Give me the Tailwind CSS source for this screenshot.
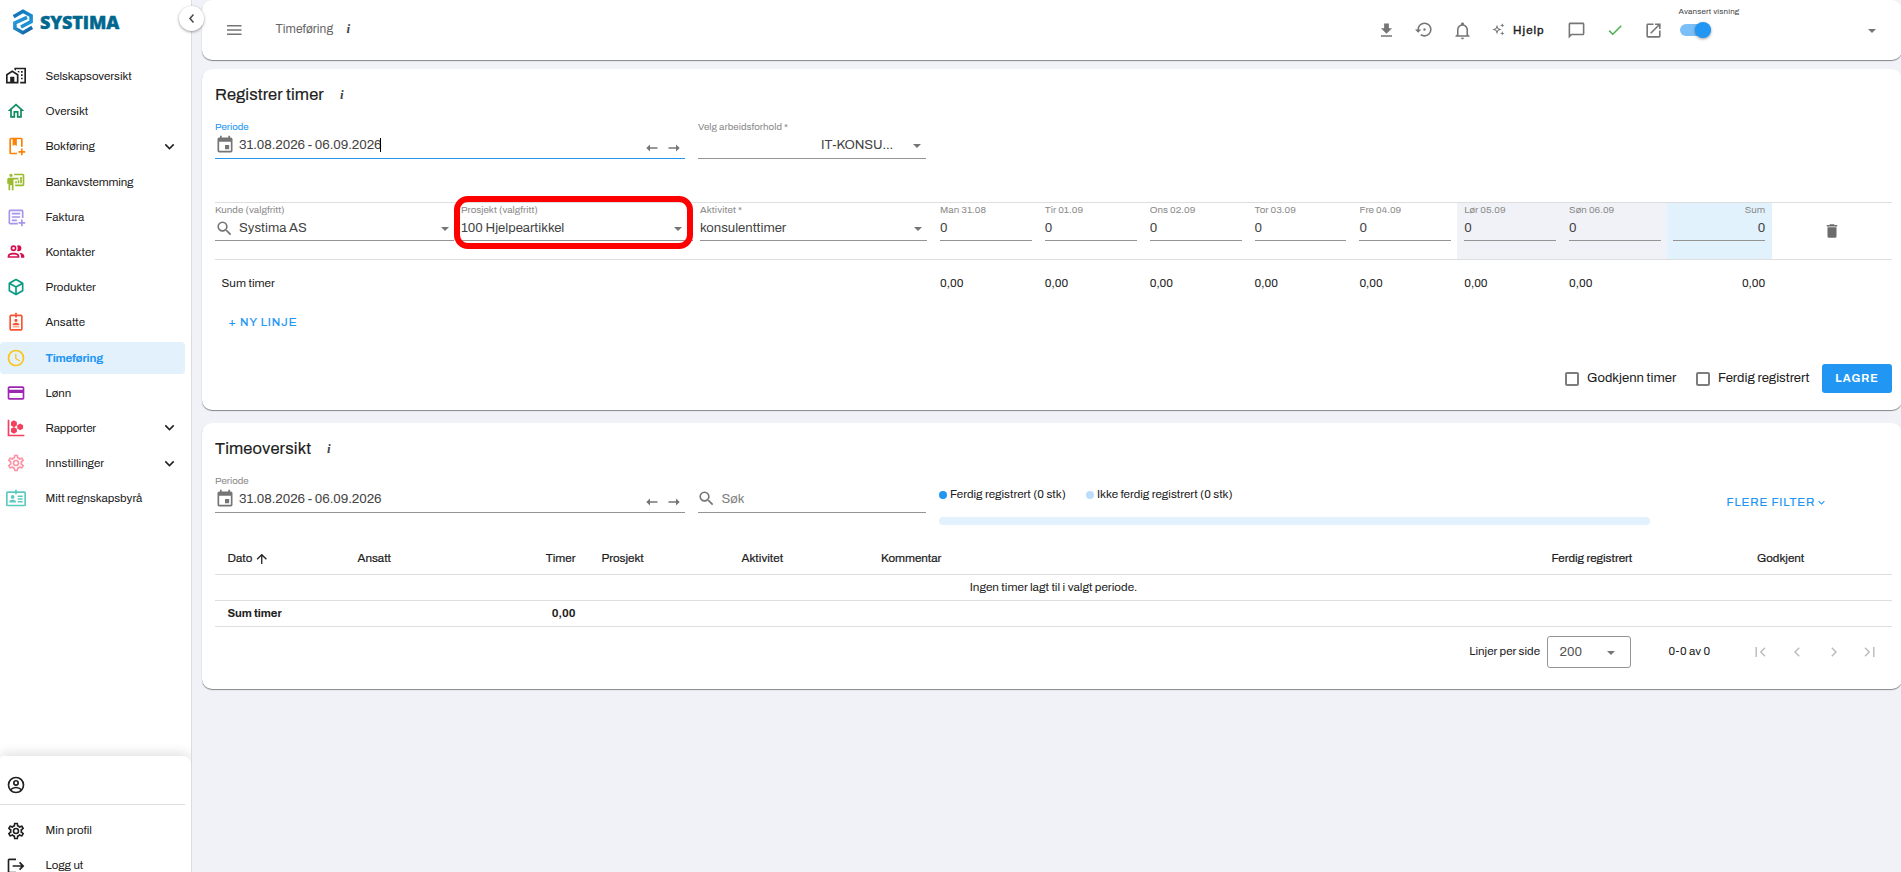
<!DOCTYPE html>
<html lang="no">
<head>
<meta charset="utf-8">
<title>Timeføring</title>
<script src="https://cdn.jsdelivr.net/npm/@tailwindcss/browser@4"></script>
</head>
<body class="w-[1901px] h-[872px] overflow-hidden bg-[#f1f2f7] font-['Archivo','Liberation_Sans',Arial,sans-serif] text-[#212121] flex">
<svg class="hidden">
  <symbol id="cog" viewBox="0 0 24 24"><path d="M12,8A4,4 0 0,1 16,12A4,4 0 0,1 12,16A4,4 0 0,1 8,12A4,4 0 0,1 12,8M12,10A2,2 0 0,0 10,12A2,2 0 0,0 12,14A2,2 0 0,0 14,12A2,2 0 0,0 12,10M10,22C9.75,22 9.54,21.82 9.5,21.58L9.13,18.93C8.5,18.68 7.96,18.34 7.44,17.94L4.95,18.95C4.73,19.03 4.46,18.95 4.34,18.73L2.34,15.27C2.21,15.05 2.27,14.78 2.46,14.63L4.57,12.97L4.5,12L4.57,11L2.46,9.37C2.27,9.22 2.21,8.95 2.34,8.73L4.34,5.27C4.46,5.05 4.73,4.96 4.95,5.05L7.44,6.05C7.96,5.66 8.5,5.32 9.13,5.07L9.5,2.42C9.54,2.18 9.75,2 10,2H14C14.25,2 14.46,2.18 14.5,2.42L14.87,5.07C15.5,5.32 16.04,5.66 16.56,6.05L19.05,5.05C19.27,4.96 19.54,5.05 19.66,5.27L21.66,8.73C21.79,8.95 21.73,9.22 21.54,9.37L19.43,11L19.5,12L19.43,13L21.54,14.63C21.73,14.78 21.79,15.05 21.66,15.27L19.66,18.73C19.54,18.95 19.27,19.04 19.05,18.95L16.56,17.95C16.04,18.34 15.5,18.68 14.87,18.93L14.5,21.58C14.46,21.82 14.25,22 14,22H10M11.25,4L10.88,6.61C9.68,6.86 8.62,7.5 7.85,8.39L5.44,7.35L4.69,8.65L6.8,10.2C6.4,11.37 6.4,12.64 6.8,13.8L4.68,15.36L5.43,16.66L7.86,15.62C8.63,16.5 9.68,17.14 10.87,17.38L11.24,20H12.76L13.13,17.39C14.32,17.14 15.37,16.5 16.14,15.62L18.57,16.66L19.32,15.36L17.2,13.81C17.6,12.64 17.6,11.37 17.2,10.2L19.31,8.65L18.56,7.35L16.15,8.39C15.38,7.5 14.32,6.86 13.12,6.62L12.75,4H11.25Z"/></symbol>
  <symbol id="down" viewBox="0 0 24 24"><path d="M7.41,8.58L12,13.17L16.59,8.58L18,10L12,16L6,10L7.41,8.58Z"/></symbol>
  <symbol id="caret" viewBox="0 0 8 4"><path d="M0 0H8L4 4Z"/></symbol>
  <symbol id="cal" viewBox="0 0 24 24"><path d="M19,19H5V8H19M16,1V3H8V1H6V3H5C3.89,3 3,3.89 3,5V19A2,2 0 0,0 5,21H19A2,2 0 0,0 21,19V5C21,3.89 20.1,3 19,3H18V1M17,12H12V17H17V12Z"/></symbol>
  <symbol id="mag" viewBox="0 0 24 24"><path d="M9.5,3A6.5,6.5 0 0,1 16,9.5C16,11.11 15.41,12.59 14.44,13.73L14.71,14H15.5L20.5,19L19,20.5L14,15.5V14.71L13.73,14.44C12.59,15.41 11.11,16 9.5,16A6.5,6.5 0 0,1 3,9.5A6.5,6.5 0 0,1 9.5,3M9.5,5C7,5 5,7 5,9.5C5,12 7,14 9.5,14C12,14 14,12 14,9.5C14,7 12,5 9.5,5Z"/></symbol>
  <symbol id="left" viewBox="0 0 12 8"><path d="M4 .5V3.2H11.5V4.8H4V7.5L.3 4Z"/></symbol>
  <symbol id="right" viewBox="0 0 12 8"><path d="M8 .5V3.2H.5V4.8H8V7.5L11.7 4Z"/></symbol>
</svg>

<!-- Sidebar -->
<aside class="relative w-[192px] h-[872px] shrink-0 bg-white border-r border-[#dcdcde] flex flex-col">
  <div class="flex h-[60px] pt-[9px] pl-[13px]">
    <svg class="w-5 h-[26px]" viewBox="0 0 20 26" fill="none" stroke-width="3.6">
      <defs><linearGradient id="lg1" x1="0" y1="0" x2="1" y2="1"><stop offset="0" stop-color="#0f6fb4"/><stop offset="1" stop-color="#1f9be0"/></linearGradient><linearGradient id="lg2" x1="0" y1="0" x2="1" y2="1"><stop offset="0" stop-color="#2aa3e6"/><stop offset="1" stop-color="#0e5f9e"/></linearGradient></defs>
      <path stroke="url(#lg1)" d="M.6 7.8L10 2.3L18.1 6.8V12.6L8 18"/>
      <path stroke="url(#lg2)" d="M14 8.4L1.9 13.8V19.2L10 23.7L19.2 18.4"/>
    </svg>
    <div class="ml-[7px] mt-[3px] h-5 leading-5 text-[18px] font-extrabold font-['Open_Sans',sans-serif] text-[#00688f] tracking-[-0.15px] [-webkit-text-stroke:0.4px_#00688f]">SYSTIMA</div>
  </div>
  <nav class="flex flex-col gap-[3.2px] text-[11.5px] leading-8">
    <div class="flex items-center h-8 pl-[6px] gap-[19.5px]"><svg class="size-5" viewBox="0 0 24 24" fill="#212121"><path d="M10 2V4.26L12 5.59V4H22V19H17V21H24V2H10M7.5 5L0 10V21H15V10L7.5 5M14 6V6.93L15.61 8H16V6H14M18 6V8H20V6H18M7.5 7.5L13 11V19H10V13H5V19H2V11L7.5 7.5M18 10V12H20V10H18M18 14V16H20V14H18Z"/></svg><span class="tracking-[-0.05px]">Selskapsoversikt</span></div>
    <div class="flex items-center h-8 pl-[6px] gap-[19.5px]"><svg class="size-5" viewBox="0 0 24 24" fill="#0d8a63"><path d="M12 5.69L17 10.19V18H15V12H9V18H7V10.19L12 5.69M12 3L2 12H5V20H11V14H13V20H19V12H22"/></svg>Oversikt</div>
    <div class="flex items-center h-8 pl-[6px] gap-[19.5px]"><svg class="size-5" viewBox="0 0 24 24" fill="#ff7f00"><path d="M18 2H6a2 2 0 0 0-2 2v16a2 2 0 0 0 2 2h7.5a6 6 0 0 1-.4-2H6V4h2v8l2.5-1.5L13 12V4h5v9.1a6 6 0 0 1 2 0V4a2 2 0 0 0-2-2M18 15v3h-3v2h3v3h2v-3h3v-2h-3v-3z"/></svg>Bokføring<svg class="size-[19px] ml-auto mr-[12.5px]" fill="#212121"><use href="#down"/></svg></div>
    <div class="flex items-center h-8 pl-[6px] gap-[19.5px]"><svg class="size-5" viewBox="0 0 24 24" fill="#9abb2e"><path d="M20 17a2 2 0 0 0 2-2V4a2 2 0 0 0-2-2H9.5c.3.6.5 1.300.5 2H20v11h-9v2M15 7v2H9v13H7v-6H5v6H3v-8H1.500V9a2 2 0 0 1 2-2zM8 4a2 2 0 1 1-4 0 2 2 0 0 1 4 0zM17 6h2v7.500h-2zM14 10h2v3.500h-2zM11 11h2v2.500h-2z"/></svg><span class="tracking-[-0.1px]">Bankavstemming</span></div>
    <div class="flex items-center h-8 pl-[6px] gap-[19.5px]"><svg class="size-5" viewBox="0 0 24 24" fill="#a795ec"><path d="M19 3H5a2 2 0 0 0-2 2v14a2 2 0 0 0 2 2h9.300a5 5 0 0 1-.3-2H5V5h14v8.100a6 6 0 0 1 2 .2V5a2 2 0 0 0-2-2M7 7h10v2H7zM7 11h10v2H7zM7 15h6v2H7zM18 15v3h-3v2h3v3h2v-3h3v-2h-3v-3z"/></svg>Faktura</div>
    <div class="flex items-center h-8 pl-[6px] gap-[19.5px]"><svg class="size-5" viewBox="0 0 24 24" fill="#d50f4e"><path d="M13.07 10.41A5 5 0 0 0 13.07 4.59A3.39 3.39 0 0 1 15 4A3.5 3.5 0 0 1 15 11A3.39 3.39 0 0 1 13.07 10.41M5.5 7.5A3.5 3.5 0 1 1 9 11A3.5 3.5 0 0 1 5.5 7.5M7.5 7.5A1.5 1.5 0 1 0 9 6A1.5 1.5 0 0 0 7.5 7.5M16 17V19H2V17S2 13 9 13 16 17 16 17M14 17C13.86 16.22 12.67 15 9 15S4.070 16.310 4 17M15.95 13A5.320 5.320 0 0 1 18 17V19H22V17S22 13.370 15.940 13Z"/></svg>Kontakter</div>
    <div class="flex items-center h-8 pl-[6px] gap-[19.5px]"><svg class="size-5" viewBox="0 0 24 24" fill="#0a9b87"><path d="M21,16.5C21,16.88 20.79,17.21 20.47,17.38L12.57,21.82C12.41,21.94 12.21,22 12,22C11.79,22 11.59,21.94 11.43,21.82L3.53,17.38C3.21,17.21 3,16.88 3,16.5V7.5C3,7.12 3.21,6.79 3.53,6.62L11.43,2.18C11.59,2.06 11.79,2 12,2C12.21,2 12.41,2.06 12.57,2.18L20.47,6.62C20.79,6.79 21,7.12 21,7.5V16.5M12,4.15L6.04,7.5L12,10.85L17.96,7.5L12,4.15M5,15.91L11,19.29V12.58L5,9.21V15.91M19,15.91V9.21L13,12.58V19.29L19,15.91Z"/></svg>Produkter</div>
    <div class="flex items-center h-8 pl-[6px] gap-[19.5px]"><svg class="size-5" viewBox="0 0 24 24" fill="#fa5533"><path fill-rule="evenodd" d="M13 3V1H11V3H6A2 2 0 0 0 4 5V20.500A2 2 0 0 0 6 22.500H18A2 2 0 0 0 20 20.500V5A2 2 0 0 0 18 3ZM6 5H11V6.500H13V5H18V20.500H6ZM12 8a2 2 0 1 1 0 4 2 2 0 0 1 0-4zM8 16v-1c0-1.300 2.700-2 4-2s4 .7 4 2v1zM8 17.300h8v1.100H8z"/></svg>Ansatte</div>
    <div class="flex items-center h-8 pl-[6px] gap-[19.5px] w-[185px] bg-[#e3f1fd] rounded text-[#2196f3] font-bold"><svg class="size-5" viewBox="0 0 24 24" fill="#fcc419"><path d="M12,20A8,8 0 0,0 20,12A8,8 0 0,0 12,4A8,8 0 0,0 4,12A8,8 0 0,0 12,20M12,2A10,10 0 0,1 22,12A10,10 0 0,1 12,22C6.47,22 2,17.5 2,12A10,10 0 0,1 12,2M12.5,7V12.25L17,14.92L16.25,16.15L11,13V7H12.5Z"/></svg><span class="tracking-[-0.2px]">Timeføring</span></div>
    <div class="flex items-center h-8 pl-[6px] gap-[19.5px]"><svg class="size-5" viewBox="0 0 24 24" fill="#9c27b0"><path d="M20,8H4V6H20M20,18H4V12H20M20,4H4C2.89,4 2,4.89 2,6V18C2,19.11 2.89,20 4,20H20C21.11,20 22,19.11 22,18V6C22,4.89 21.1,4 20,4Z"/></svg>Lønn</div>
    <div class="flex items-center h-8 pl-[6px] gap-[19.5px]"><svg class="size-5" viewBox="0 0 24 24" fill="#f43f5e"><path d="M2,2H4V20H22V22H2V2M9.500 2.800L13 4.900V8.900L9.500 11L6 8.900V4.900ZM9.500 10.800L13 12.900V16.900L9.500 19L6 16.900V12.900ZM17 6.500L20.500 8.600V12.600L17 14.700L13.500 12.600V8.600Z"/></svg><span class="tracking-[-0.1px]">Rapporter</span><svg class="size-[19px] ml-auto mr-[12.5px]" fill="#212121"><use href="#down"/></svg></div>
    <div class="flex items-center h-8 pl-[6px] gap-[19.5px]"><svg class="size-5" fill="#ff93a5"><use href="#cog"/></svg>Innstillinger<svg class="size-[19px] ml-auto mr-[12.5px]" fill="#212121"><use href="#down"/></svg></div>
    <div class="flex items-center h-8 pl-[6px] gap-[19.5px]"><svg class="size-5" viewBox="0 0 24 24" fill="#5cc9bf"><path fill-rule="evenodd" d="M13 4V2H11V4H2A2 2 0 0 0 0 6V20A2 2 0 0 0 2 22H22A2 2 0 0 0 24 20V6A2 2 0 0 0 22 4ZM2 6H11V7.500H13V6H22V20H2ZM8 8.500a2.200 2.200 0 1 1 0 4.400 2.200 2.200 0 0 1 0-4.400zM4 17.500v-1c0-1.600 2.700-2.400 4-2.400s4 .8 4 2.400v1zM14 9h6v1.800h-6zM14 12.400h6v1.800h-6zM14 15.700h6v1.800h-6z"/></svg>Mitt regnskapsbyrå</div>
  </nav>
  <div class="mt-auto h-[116px] bg-white rounded-tr-lg rounded-tl-sm shadow-[0_-3px_12px_rgba(0,0,0,0.12)] text-[11.5px] overflow-hidden [clip-path:inset(-20px_0_0_0)]">
    <div class="h-[49px] w-[185px] border-b border-[#dedede] pl-[6px] pt-[19px]">
      <svg class="size-5" viewBox="0 0 24 24" fill="none" stroke="#212121" stroke-width="2"><circle cx="12" cy="12" r="9"/><circle cx="12" cy="9.500" r="2.600"/><path d="M5.500 17.700C7.500 15.500 9.700 15 12 15s4.500.5 6.500 2.700"/></svg>
    </div>
    <div class="flex items-center h-[34px] mt-[9px] pl-[6px] gap-[19.5px]"><svg class="size-5" fill="#212121"><use href="#cog"/></svg>Min profil</div>
    <div class="flex items-center h-[34px] mt-[1px] pl-[6px] gap-[19.5px]"><svg class="size-5" viewBox="0 0 24 24" fill="#212121"><path d="M17 7L15.590 8.410L18.170 11H8V13H18.170L15.590 15.580L17 17L22 12M4 5H12V3H4C2.900 3 2 3.900 2 5V19C2 20.100 2.900 21 4 21H12V19H4V5Z"/></svg>Logg ut</div>
  </div>
  <div class="absolute left-[179px] top-[6px] size-[25px] rounded-full bg-white shadow-[0_1px_3px_rgba(0,0,0,0.4)] flex items-center justify-center z-10">
    <svg class="w-[5px] h-[9px]" viewBox="0 0 5 9" fill="none" stroke="#444" stroke-width="1.500"><path d="M4.500 .5L1 4.500L4.500 8.500"/></svg>
  </div>
</aside>

<main class="flex flex-col w-[1700px] ml-[10px] shrink-0">
  <!-- Top bar -->
  <header class="h-[60px] bg-white rounded-[10px] shadow-[0_1px_1px_rgba(0,0,0,0.45)] flex text-[#666]">
    <svg class="w-[15px] h-[10px] ml-[25px] mt-[25px]" viewBox="0 0 15 10" fill="#757575"><path d="M0 0H14.500V1.500H0ZM0 4.200H14.500V5.700H0ZM0 8.400H14.500V9.900H0Z"/></svg>
    <div class="ml-[33.5px] mt-[19px] h-5 leading-5 text-[12px] w-[62px] tracking-[0.05px]">Timeføring</div>
    <div class="ml-[9px] mt-[19px] h-5 leading-5 text-[13px] font-bold italic font-['Liberation_Serif',serif] text-[#444] w-[8px]">i</div>
    <svg class="ml-[1022px] mt-[20.5px] size-[19px]" viewBox="0 0 24 24" fill="#757575"><path d="M5,20H19V18H5M19,9H15V3H9V9H5L12,16L19,9Z"/></svg>
    <svg class="ml-[19.5px] mt-[20px] size-[19px]" viewBox="0 0 24 24" fill="#757575"><path d="M13.500,12A1.500,1.500 0 1,0 10.500,12A1.500,1.500 0 1,0 13.500,12M12,3A9,9 0 0,0 3,12H0L4,16L8,12H5A7,7 0 0,1 12,5A7,7 0 0,1 19,12A7,7 0 0,1 12,19C10.5,19 9.09,18.5 7.94,17.7L6.5,19.14C8.04,20.3 9.94,21 12,21A9,9 0 0,0 21,12A9,9 0 0,0 12,3Z"/></svg>
    <svg class="ml-[19px] mt-[21px] size-[19px]" viewBox="0 0 24 24" fill="#757575"><path d="M10 21H14C14 22.1 13.1 23 12 23S10 22.1 10 21M21 19V20H3V19L5 17V11C5 7.9 7 5.2 10 4.3V4C10 2.9 10.9 2 12 2S14 2.9 14 4V4.300C17 5.200 19 7.900 19 11V17L21 19M17 11C17 8.200 14.800 6 12 6S7 8.200 7 11V18H17V11Z"/></svg>
    <svg class="ml-[20px] mt-[22.500px] w-[13px] h-[13px]" viewBox="0 0 13 13" fill="#757575"><path fill-rule="evenodd" d="M5 1.800L6.300 5.200L9.700 6.500L6.300 7.800L5 11.200L3.700 7.800L.3 6.500L3.700 5.200ZM5 4.600L4.400 5.900L3.100 6.500L4.400 7.100L5 8.400L5.600 7.100L6.900 6.500L5.600 5.900ZM10.300 .2L10.900 1.800L12.500 2.400L10.900 3L10.300 4.600L9.700 3L8.100 2.400L9.700 1.800ZM10.300 8.200L10.900 9.800L12.500 10.400L10.900 11L10.300 12.600L9.700 11L8.100 10.400L9.700 9.800Z"/></svg>
    <div class="ml-[8px] mt-[20px] h-5 leading-5 w-[32px] text-[11.5px] text-[#212121] tracking-[1.05px] [-webkit-text-stroke:0.4px] whitespace-nowrap">Hjelp</div>
    <svg class="ml-[22px] mt-[20.500px] size-[19px]" viewBox="0 0 24 24" fill="#757575"><path d="M20 2H4C2.900 2 2 2.900 2 4V22L6 18H20C21.100 18 22 17.100 22 16V4C22 2.900 21.100 2 20 2M20 16H5.200L4 17.200V4H20V16Z"/></svg>
    <svg class="ml-[20px] mt-[21px] size-[18px]" viewBox="0 0 24 24" fill="#4caf50"><path d="M21,7L9,19L3.500,13.500L4.910,12.090L9,16.170L19.590,5.590L21,7Z"/></svg>
    <svg class="ml-[19.500px] mt-[20.500px] size-[19px]" viewBox="0 0 24 24" fill="#757575"><path d="M14,3V5H17.590L7.760,14.830L9.170,16.240L19,6.410V10H21V3M19,19H5V5H12V3H5C3.890,3 3,3.900 3,5V19A2,2 0 0,0 5,21H19A2,2 0 0,0 21,19V12H19V19Z"/></svg>
    <div class="ml-[16px] w-[61px] mt-[7px]">
      <div class="h-[10px] leading-[10px] text-[8px] tracking-[0.15px] text-[#444] whitespace-nowrap">Avansert visning</div>
      <div class="ml-[1.500px] mt-[7px] w-[31px] h-[12px] rounded-full bg-[#7bbff8] flex items-center justify-end"><div class="size-4 rounded-full bg-[#2196f3] shadow-[0_1px_3px_rgba(0,0,0,0.4)]"></div></div>
    </div>
    <svg class="ml-[128px] mt-[28.500px] w-2 h-1" fill="#757575"><use href="#caret"/></svg>
  </header>

  <!-- Register hours -->
  <section class="mt-[9px] h-[341px] bg-white rounded-[10px] shadow-[0_1px_1px_rgba(0,0,0,0.45)] pl-[13px] pr-[10px] flex flex-col">
    <div class="flex items-center h-[20px] mt-[16px]"><h1 class="text-[16.5px] w-[125px] whitespace-nowrap tracking-[0.1px] [-webkit-text-stroke:0.15px]">Registrer timer</h1><i class="text-[13px] font-bold font-['Liberation_Serif',serif] text-[#444]">i</i></div>
    <div class="flex mt-[16px] gap-[13px]">
      <div class="w-[470px] h-[38px] border-b border-[#2196f3]">
        <div class="h-3 leading-3 text-[9.75px] text-[#2196f3]">Periode</div>
        <div class="flex items-center h-[23px] pr-[5px]"><svg class="size-5 -ml-[0.500px]" fill="#757575"><use href="#cal"/></svg><span class="ml-[4.500px] text-[13.1px] text-[#444] tracking-[-0.04px]">31.08.2026 - 06.09.2026</span><span class="-ml-px w-px h-[14px] bg-black"></span>
          <svg class="ml-auto mt-[7px] w-[12px] h-2" fill="#757575"><use href="#left"/></svg><svg class="ml-[10px] mt-[7px] w-[12px] h-2" fill="#757575"><use href="#right"/></svg></div>
      </div>
      <div class="w-[228px] h-[38px] border-b border-[#949494]">
        <div class="h-3 leading-3 text-[9.75px] text-[#8a8a8a] tracking-[0.04px]">Velg arbeidsforhold *</div>
        <div class="flex items-center h-[23px] pl-[123px] pr-[5px]"><span class="text-[13.1px] text-[#444] tracking-[-0.1px]">IT-KONSU...</span><svg class="ml-auto mt-[3px] w-2 h-1" fill="#757575"><use href="#caret"/></svg></div>
      </div>
    </div>

    <div class="mt-[43px] relative grid grid-cols-[239px_239px_240px_repeat(8,104.85px)_1fr] h-[58px] border-y border-[#dedede] text-[13.1px] text-[#444]">
      <div class="h-[38px] pt-px border-b border-[#949494]"><div class="h-3 leading-3 text-[9.75px] text-[#8a8a8a] tracking-[0.05px]">Kunde (valgfritt)</div><div class="flex items-center h-6"><svg class="size-[19px] -ml-[0.500px]" fill="#757575"><use href="#mag"/></svg><span class="ml-[5.500px]">Systima AS</span><svg class="ml-auto mr-[5px] mt-px w-2 h-1" fill="#757575"><use href="#caret"/></svg></div></div>
      <div class="h-[38px] pt-px ml-[7px] border-b border-[#949494]"><div class="h-3 leading-3 text-[9.75px] text-[#8a8a8a] tracking-[0.03px]">Prosjekt (valgfritt)</div><div class="flex items-center h-6"><span>100 Hjelpeartikkel</span><svg class="ml-auto mr-[11px] mt-px w-2 h-1" fill="#757575"><use href="#caret"/></svg></div></div>
      <div class="h-[38px] pt-px ml-[7px] mr-[6px] border-b border-[#949494]"><div class="h-3 leading-3 text-[9.75px] text-[#8a8a8a] tracking-[0.1px]">Aktivitet *</div><div class="flex items-center h-6"><span>konsulenttimer</span><svg class="ml-auto mr-[5px] mt-px w-2 h-1" fill="#757575"><use href="#caret"/></svg></div></div>
      <div class="pl-[7px] pr-[6px]"><div class="h-[38px] pt-px border-b border-[#949494]"><div class="h-3 leading-3 text-[9.75px] text-[#8a8a8a] tracking-[0.05px]">Man 31.08</div><div class="h-6 leading-6">0</div></div></div>
      <div class="pl-[7px] pr-[6px]"><div class="h-[38px] pt-px border-b border-[#949494]"><div class="h-3 leading-3 text-[9.75px] text-[#8a8a8a] tracking-[0.05px]">Tir 01.09</div><div class="h-6 leading-6">0</div></div></div>
      <div class="pl-[7px] pr-[6px]"><div class="h-[38px] pt-px border-b border-[#949494]"><div class="h-3 leading-3 text-[9.75px] text-[#8a8a8a] tracking-[0.05px]">Ons 02.09</div><div class="h-6 leading-6">0</div></div></div>
      <div class="pl-[7px] pr-[6px]"><div class="h-[38px] pt-px border-b border-[#949494]"><div class="h-3 leading-3 text-[9.75px] text-[#8a8a8a] tracking-[0.05px]">Tor 03.09</div><div class="h-6 leading-6">0</div></div></div>
      <div class="pl-[7px] pr-[6px]"><div class="h-[38px] pt-px border-b border-[#949494]"><div class="h-3 leading-3 text-[9.75px] text-[#8a8a8a] tracking-[0.05px]">Fre 04.09</div><div class="h-6 leading-6">0</div></div></div>
      <div class="pl-[7px] pr-[6px] bg-[#f1f2f7]"><div class="h-[38px] pt-px border-b border-[#949494]"><div class="h-3 leading-3 text-[9.75px] text-[#8a8a8a] tracking-[0.05px]">Lør 05.09</div><div class="h-6 leading-6">0</div></div></div>
      <div class="pl-[7px] pr-[6px] bg-[#f1f2f7]"><div class="h-[38px] pt-px border-b border-[#949494]"><div class="h-3 leading-3 text-[9.75px] text-[#8a8a8a] tracking-[0.05px]">Søn 06.09</div><div class="h-6 leading-6">0</div></div></div>
      <div class="pl-[6px] pr-[6.5px] bg-[#e1f2fd] text-right"><div class="h-[38px] pt-px border-b border-[#949494]"><div class="h-3 leading-3 text-[9.75px] text-[#8a8a8a]">Sum</div><div class="h-6 leading-6">0</div></div></div>
      <div class="flex justify-center pt-[19px]"><svg class="size-[18px]" viewBox="0 0 24 24" fill="#6b6b6b"><path d="M19,4H15.500L14.500,3H9.500L8.500,4H5V6H19M6,19A2,2 0 0,0 8,21H16A2,2 0 0,0 18,19V7H6V19Z"/></svg></div>
      <div class="absolute left-[239px] top-[-7px] w-[239px] h-[53px] border-[6px] border-[#fe0000] rounded-[14px]"></div>
    </div>

    <div class="grid grid-cols-[718px_repeat(8,104.85px)] h-[48px] items-center text-[11.7px]">
      <div class="pl-[6.5px]">Sum timer</div><div class="pl-[7px]">0,00</div><div class="pl-[7px]">0,00</div><div class="pl-[7px]">0,00</div><div class="pl-[7px]">0,00</div><div class="pl-[7px]">0,00</div><div class="pl-[7px]">0,00</div><div class="pl-[7px]">0,00</div><div class="pr-[6.5px] text-right">0,00</div>
    </div>
    <button class="self-start ml-[13.5px] mt-[3px] h-[22px] leading-[22px] text-[11.5px] tracking-[0.95px] text-[#2196f3] [-webkit-text-stroke:0.2px]">+ NY LINJE</button>

    <div class="mt-auto mb-[17px] flex items-center justify-end h-[29px] text-[13.1px] whitespace-nowrap">
      <span class="size-[14px] rounded-[2px] border-2 border-[#7d7d7d]"></span><span class="ml-2 w-[109px] -mt-[2px]">Godkjenn timer</span>
      <span class="size-[14px] rounded-[2px] border-2 border-[#7d7d7d]"></span><span class="ml-2 w-[91px] mr-[13px] -mt-[2px]">Ferdig registrert</span>
      <button class="w-[70px] h-[29px] rounded-[3px] bg-[#2196f3] text-white font-bold text-[11px] tracking-[1px]">LAGRE</button>
    </div>
  </section>

  <!-- Hours overview -->
  <section class="mt-[13px] h-[266px] bg-white rounded-[10px] shadow-[0_1px_1px_rgba(0,0,0,0.45)] pl-[13px] pr-[10px] flex flex-col shrink-0">
    <div class="flex items-center h-[20px] mt-[16px]"><h1 class="text-[16.5px] w-[112px] whitespace-nowrap tracking-[0.15px] [-webkit-text-stroke:0.15px]">Timeoversikt</h1><i class="text-[13px] font-bold font-['Liberation_Serif',serif] text-[#444]">i</i></div>
    <div class="flex mt-[16px]">
      <div class="w-[470px] h-[38px] border-b border-[#949494]">
        <div class="h-3 leading-3 text-[9.75px] text-[#8a8a8a]">Periode</div>
        <div class="flex items-center h-[23px] pr-[5px]"><svg class="size-5 -ml-[0.500px]" fill="#757575"><use href="#cal"/></svg><span class="ml-[4.500px] text-[13.1px] text-[#444] tracking-[-0.04px]">31.08.2026 - 06.09.2026</span>
          <svg class="ml-auto mt-[7px] w-[12px] h-2" fill="#757575"><use href="#left"/></svg><svg class="ml-[10px] mt-[7px] w-[12px] h-2" fill="#757575"><use href="#right"/></svg></div>
      </div>
      <div class="ml-[13px] w-[228px] h-[38px] pt-3 border-b border-[#949494]">
        <div class="flex items-center h-[23px]"><svg class="size-[19px] -ml-[1px]" fill="#757575"><use href="#mag"/></svg><span class="ml-[5.500px] text-[13.1px] text-[#808080]">Søk</span></div>
      </div>
      <div class="ml-[13px] w-[711px] pt-[12px]">
        <div class="flex items-center h-4 text-[11.6px]"><span class="size-2 rounded-full bg-[#2196f3]"></span><span class="ml-[3px] w-[136px]">Ferdig registrert (0 stk)</span><span class="size-2 rounded-full bg-[#bbdefb]"></span><span class="ml-[3px]">Ikke ferdig registrert (0 stk)</span></div>
        <div class="mt-[14px] h-2 rounded-full bg-[#e3f1fd]"></div>
      </div>
      <div class="ml-[76.500px] mt-[17px] h-[22px] flex items-center text-[11.5px] tracking-[0.9px] text-[#2196f3] [-webkit-text-stroke:0.2px] whitespace-nowrap">FLERE FILTER<svg class="size-[13px] ml-[0px] -mt-[2px]" fill="#2196f3"><use href="#down"/></svg></div>
    </div>
    <div class="flex items-center h-[34px] pt-[2px] mt-[16px] border-b border-[#dedede] text-[11.6px] [-webkit-text-stroke:0.2px] whitespace-nowrap">
      <div class="w-[142.5px] pl-[12.5px] flex items-center">Dato<svg class="ml-[2px] size-[15.500px]" viewBox="0 0 24 24" fill="#212121"><path d="M13,20H11V8L5.500,13.500L4.080,12.080L12,4.160L19.920,12.080L18.500,13.500L13,8V20Z"/></svg></div>
      <div class="w-[142.5px]">Ansatt</div>
      <div class="w-[75.5px] text-right">Timer</div>
      <div class="w-[140px] ml-[26px]">Prosjekt</div>
      <div class="w-[139.5px]">Aktivitet</div>
      <div class="w-[670.5px]">Kommentar</div>
      <div class="w-[205.5px]">Ferdig registrert</div>
      <div>Godkjent</div>
    </div>
    <div class="h-[26px] leading-[25px] border-b border-[#dedede] text-center text-[11.7px]">Ingen timer lagt til i valgt periode.</div>
    <div class="flex h-[26px] leading-[25px] border-b border-[#dedede] text-[11.3px] font-bold"><div class="pl-[12.5px] w-[285px] tracking-[-0.05px]">Sum timer</div><div class="w-[75.5px] text-right">0,00</div></div>
    <div class="mt-[9px] flex items-center justify-end h-8 text-[11.6px]">
      <span>Linjer per side</span>
      <div class="ml-[7px] w-[84px] h-8 rounded-[3px] border border-[#949494] flex items-center pl-[11.5px] pr-[15px] text-[13.1px] text-[#555]">200<svg class="ml-auto mt-[2px] w-2 h-1" fill="#757575"><use href="#caret"/></svg></div>
      <span class="ml-[37.500px] w-[41.500px] whitespace-nowrap">0-0 av 0</span>
      <div class="ml-[45px] mr-[17px] flex items-center w-[120px]">
        <svg class="w-[11px] h-[10px]" viewBox="0 0 11 10" fill="none" stroke="#bdbdbd" stroke-width="1.500"><path d="M1.200 0V10M10 .8L5.800 5L10 9.200"/></svg>
        <svg class="ml-[27.500px] w-[6px] h-[10px]" viewBox="0 0 6 10" fill="none" stroke="#bdbdbd" stroke-width="1.500"><path d="M5.200 .8L1 5L5.200 9.200"/></svg>
        <svg class="ml-[31px] w-[6px] h-[10px]" viewBox="0 0 6 10" fill="none" stroke="#bdbdbd" stroke-width="1.500"><path d="M.8 .8L5 5L.8 9.200"/></svg>
        <svg class="ml-auto w-[11px] h-[10px]" viewBox="0 0 11 10" fill="none" stroke="#bdbdbd" stroke-width="1.500"><path d="M9.800 0V10M1 .8L5.200 5L1 9.200"/></svg>
      </div>
    </div>
  </section>
</main>
</body>
</html>
